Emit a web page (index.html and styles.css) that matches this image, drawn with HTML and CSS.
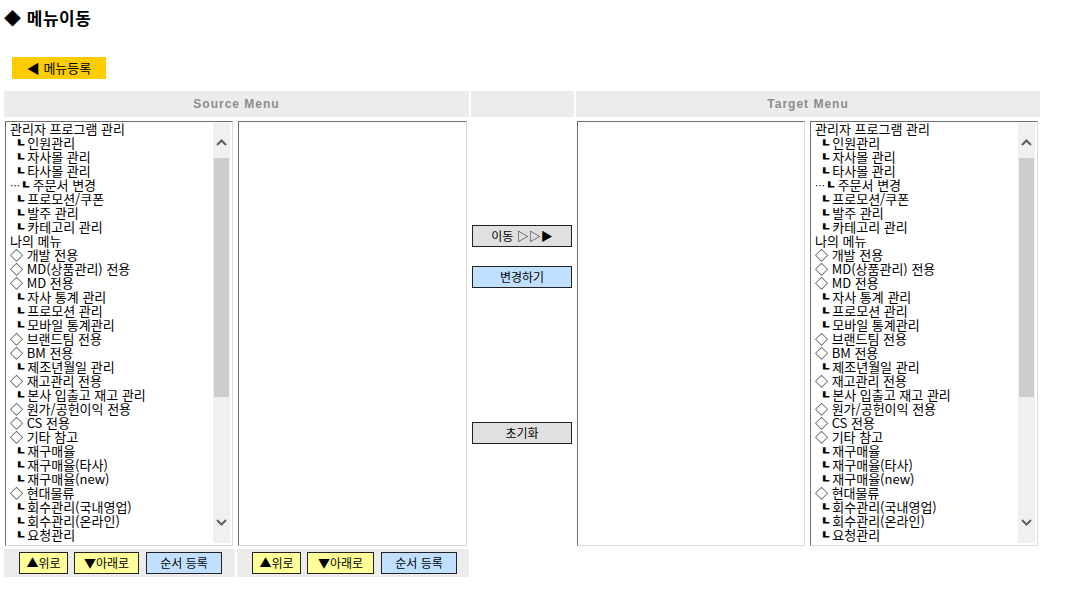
FILE: index.html
```html
<!DOCTYPE html>
<html lang="ko">
<head>
<meta charset="utf-8">
<title>메뉴이동</title>
<link rel="stylesheet" href="styles.css">
</head>
<body>
<div class="page">
  <h1 class="title">◆ 메뉴이동</h1>
  <div class="toolbar"><button class="btn-reg">◀ 메뉴등록</button></div>

  <div class="grid">
    <div class="hd span2">Source Menu</div>
    <div class="hd"></div>
    <div class="hd span2">Target Menu</div>

    <div class="cell">
      <div class="box">
        <ul class="list">
          <li>관리자 프로그램 관리</li>
          <li>&nbsp;<b class="l">┗</b>인원관리</li>
          <li>&nbsp;<b class="l">┗</b>자사몰 관리</li>
          <li>&nbsp;<b class="l">┗</b>타사몰 관리</li>
          <li><span class="dots">…</span><b class="l">┗</b>주문서 변경</li>
          <li>&nbsp;<b class="l">┗</b>프로모션/쿠폰</li>
          <li>&nbsp;<b class="l">┗</b>발주 관리</li>
          <li>&nbsp;<b class="l">┗</b>카테고리 관리</li>
          <li>나의 메뉴</li>
          <li>◇ 개발 전용</li>
          <li>◇ MD(상품관리) 전용</li>
          <li>◇ MD 전용</li>
          <li>&nbsp;<b class="l">┗</b>자사 통계 관리</li>
          <li>&nbsp;<b class="l">┗</b>프로모션 관리</li>
          <li>&nbsp;<b class="l">┗</b>모바일 통계관리</li>
          <li>◇ 브랜드팀 전용</li>
          <li>◇ BM 전용</li>
          <li>&nbsp;<b class="l">┗</b>제조년월일 관리</li>
          <li>◇ 재고관리 전용</li>
          <li>&nbsp;<b class="l">┗</b>본사 입출고 재고 관리</li>
          <li>◇ 원가/공헌이익 전용</li>
          <li>◇ CS 전용</li>
          <li>◇ 기타 참고</li>
          <li>&nbsp;<b class="l">┗</b>재구매율</li>
          <li>&nbsp;<b class="l">┗</b>재구매율(타사)</li>
          <li>&nbsp;<b class="l">┗</b>재구매율(new)</li>
          <li>◇ 현대물류</li>
          <li>&nbsp;<b class="l">┗</b>회수관리(국내영업)</li>
          <li>&nbsp;<b class="l">┗</b>회수관리(온라인)</li>
          <li>&nbsp;<b class="l">┗</b>요청관리</li>
        </ul>
        <div class="sb">
          <div class="sb-btn"><svg width="11" height="7" viewBox="0 0 11 7"><polyline points="1,6 5.5,1.5 10,6" fill="none" stroke="#5f5f5f" stroke-width="2"/></svg></div>
          <div class="thumb"></div>
          <div class="sb-rest"><svg width="11" height="7" viewBox="0 0 11 7"><polyline points="1,1 5.5,5.5 10,1" fill="none" stroke="#5f5f5f" stroke-width="2"/></svg></div>
        </div>
      </div>
    </div>
    <div class="cell"><div class="box"></div></div>

    <div class="mid">
      <button class="btn gray b-move">이동 ▷▷▶</button>
      <button class="btn blue b-change">변경하기</button>
      <button class="btn gray b-reset">초기화</button>
    </div>

    <div class="cell"><div class="box"></div></div>
    <div class="cell">
      <div class="box">
        <ul class="list">
          <li>관리자 프로그램 관리</li>
          <li>&nbsp;<b class="l">┗</b>인원관리</li>
          <li>&nbsp;<b class="l">┗</b>자사몰 관리</li>
          <li>&nbsp;<b class="l">┗</b>타사몰 관리</li>
          <li><span class="dots">…</span><b class="l">┗</b>주문서 변경</li>
          <li>&nbsp;<b class="l">┗</b>프로모션/쿠폰</li>
          <li>&nbsp;<b class="l">┗</b>발주 관리</li>
          <li>&nbsp;<b class="l">┗</b>카테고리 관리</li>
          <li>나의 메뉴</li>
          <li>◇ 개발 전용</li>
          <li>◇ MD(상품관리) 전용</li>
          <li>◇ MD 전용</li>
          <li>&nbsp;<b class="l">┗</b>자사 통계 관리</li>
          <li>&nbsp;<b class="l">┗</b>프로모션 관리</li>
          <li>&nbsp;<b class="l">┗</b>모바일 통계관리</li>
          <li>◇ 브랜드팀 전용</li>
          <li>◇ BM 전용</li>
          <li>&nbsp;<b class="l">┗</b>제조년월일 관리</li>
          <li>◇ 재고관리 전용</li>
          <li>&nbsp;<b class="l">┗</b>본사 입출고 재고 관리</li>
          <li>◇ 원가/공헌이익 전용</li>
          <li>◇ CS 전용</li>
          <li>◇ 기타 참고</li>
          <li>&nbsp;<b class="l">┗</b>재구매율</li>
          <li>&nbsp;<b class="l">┗</b>재구매율(타사)</li>
          <li>&nbsp;<b class="l">┗</b>재구매율(new)</li>
          <li>◇ 현대물류</li>
          <li>&nbsp;<b class="l">┗</b>회수관리(국내영업)</li>
          <li>&nbsp;<b class="l">┗</b>회수관리(온라인)</li>
          <li>&nbsp;<b class="l">┗</b>요청관리</li>
        </ul>
        <div class="sb">
          <div class="sb-btn"><svg width="11" height="7" viewBox="0 0 11 7"><polyline points="1,6 5.5,1.5 10,6" fill="none" stroke="#5f5f5f" stroke-width="2"/></svg></div>
          <div class="thumb"></div>
          <div class="sb-rest"><svg width="11" height="7" viewBox="0 0 11 7"><polyline points="1,1 5.5,5.5 10,1" fill="none" stroke="#5f5f5f" stroke-width="2"/></svg></div>
        </div>
      </div>
    </div>

    <div class="ft">
      <button class="btn yellow w-up">▲위로</button>
      <button class="btn yellow w-down">▼아래로</button>
      <button class="btn blue w-save">순서 등록</button>
    </div>
    <div class="ft">
      <button class="btn yellow w-up">▲위로</button>
      <button class="btn yellow w-down2">▼아래로</button>
      <button class="btn blue w-save">순서 등록</button>
    </div>
  </div>
</div>
</body>
</html>
```

FILE: styles.css
```css
* { box-sizing: border-box; }
html, body { margin: 0; padding: 0; background: #fff; }
body {
  font-family: "Noto Sans CJK KR", "Noto Sans", sans-serif;
  font-size: 12px;
  color: #000;
}
.page { padding: 0 0 0 4px; }

.title {
  margin: 7px 0 0 0;
  font-size: 17px;
  line-height: 22px;
  font-weight: bold;
  letter-spacing: 0.5px;
}

.toolbar { margin-top: 28px; padding-left: 8px; height: 22px; }
.btn-reg {
  width: 94px; height: 22px;
  border: 0; background: #ffcc00;
  font: 13px/22px "Noto Sans CJK KR", sans-serif;
  color: #000; padding: 0;
}

.grid {
  margin-top: 12px;
  display: grid;
  grid-template-columns: 231px 232px 103px 231px 231px;
  grid-template-rows: 26px 426px 28px;
  column-gap: 2px;
  row-gap: 3px;
}
.hd {
  background: #ececec;
  color: #8c8c8c;
  font: bold 12px/26px "Liberation Sans", Arial, sans-serif;
  letter-spacing: 1px;
  text-align: center;
}
.span2 { grid-column: span 2; }

.cell { padding: 1px 0 0 1px; }
.box {
  height: 100%;
  width: calc(100% - 2px);
  border: 1px solid;
  border-color: #6e6e6e #dcdcdc #dcdcdc #6e6e6e;
  display: flex;
  background: #fff;
  overflow: hidden;
}
.list {
  list-style: none;
  margin: 0;
  padding: 0 0 0 4px;
  flex: 1;
  min-width: 0;
  font-size: 13px;
  line-height: 14px;
  white-space: nowrap;
  overflow: hidden;
}
.list li { height: 14px; }
.l {
  display: inline-block;
  font-family: "DejaVu Sans", sans-serif;
  font-weight: bold;
  font-size: 11px;
  line-height: 14px;
  transform: scale(1.5, 0.85);
  margin: 0 5px 0 2px;
}
.dots { font-size: 10px; letter-spacing: -1px; }

.sb {
  width: 17px;
  margin: 1px 2px 2px 0;
  background: #f0f0f0;
  display: flex;
  flex-direction: column;
  align-items: center;
}
.sb-btn { height: 35px; display: flex; align-items: center; justify-content: center; padding-top: 4px; }
.thumb { width: 15px; height: 239px; background: #cdcdcd; }
.sb-rest { flex: 1; display: flex; align-items: flex-end; justify-content: center; padding-bottom: 17px; }

.mid {
  display: flex;
  flex-direction: column;
  padding-top: 105px;
}
.btn {
  height: 22px;
  border: 1px solid #222;
  font: 12px/20px "Noto Sans CJK KR", sans-serif;
  color: #000;
  padding: 0;
  text-align: center;
}
.gray { background: #e0e0e0; }
.blue { background: #c1e0ff; }
.yellow { background: #ffff99; }
.mid .btn { width: 100px; margin-left: 1px; }
.b-change { margin-top: 19px; }
.b-reset { margin-top: 134px; }

.ft {
  background: #ececec;
  display: flex;
  align-items: center;
  padding-left: 15px;
}
.w-up { width: 49px; }
.w-down { width: 65px; margin-left: 6px; }
.w-down2 { width: 67px; margin-left: 6px; }
.w-save { width: 76px; margin-left: 7px; }
```
